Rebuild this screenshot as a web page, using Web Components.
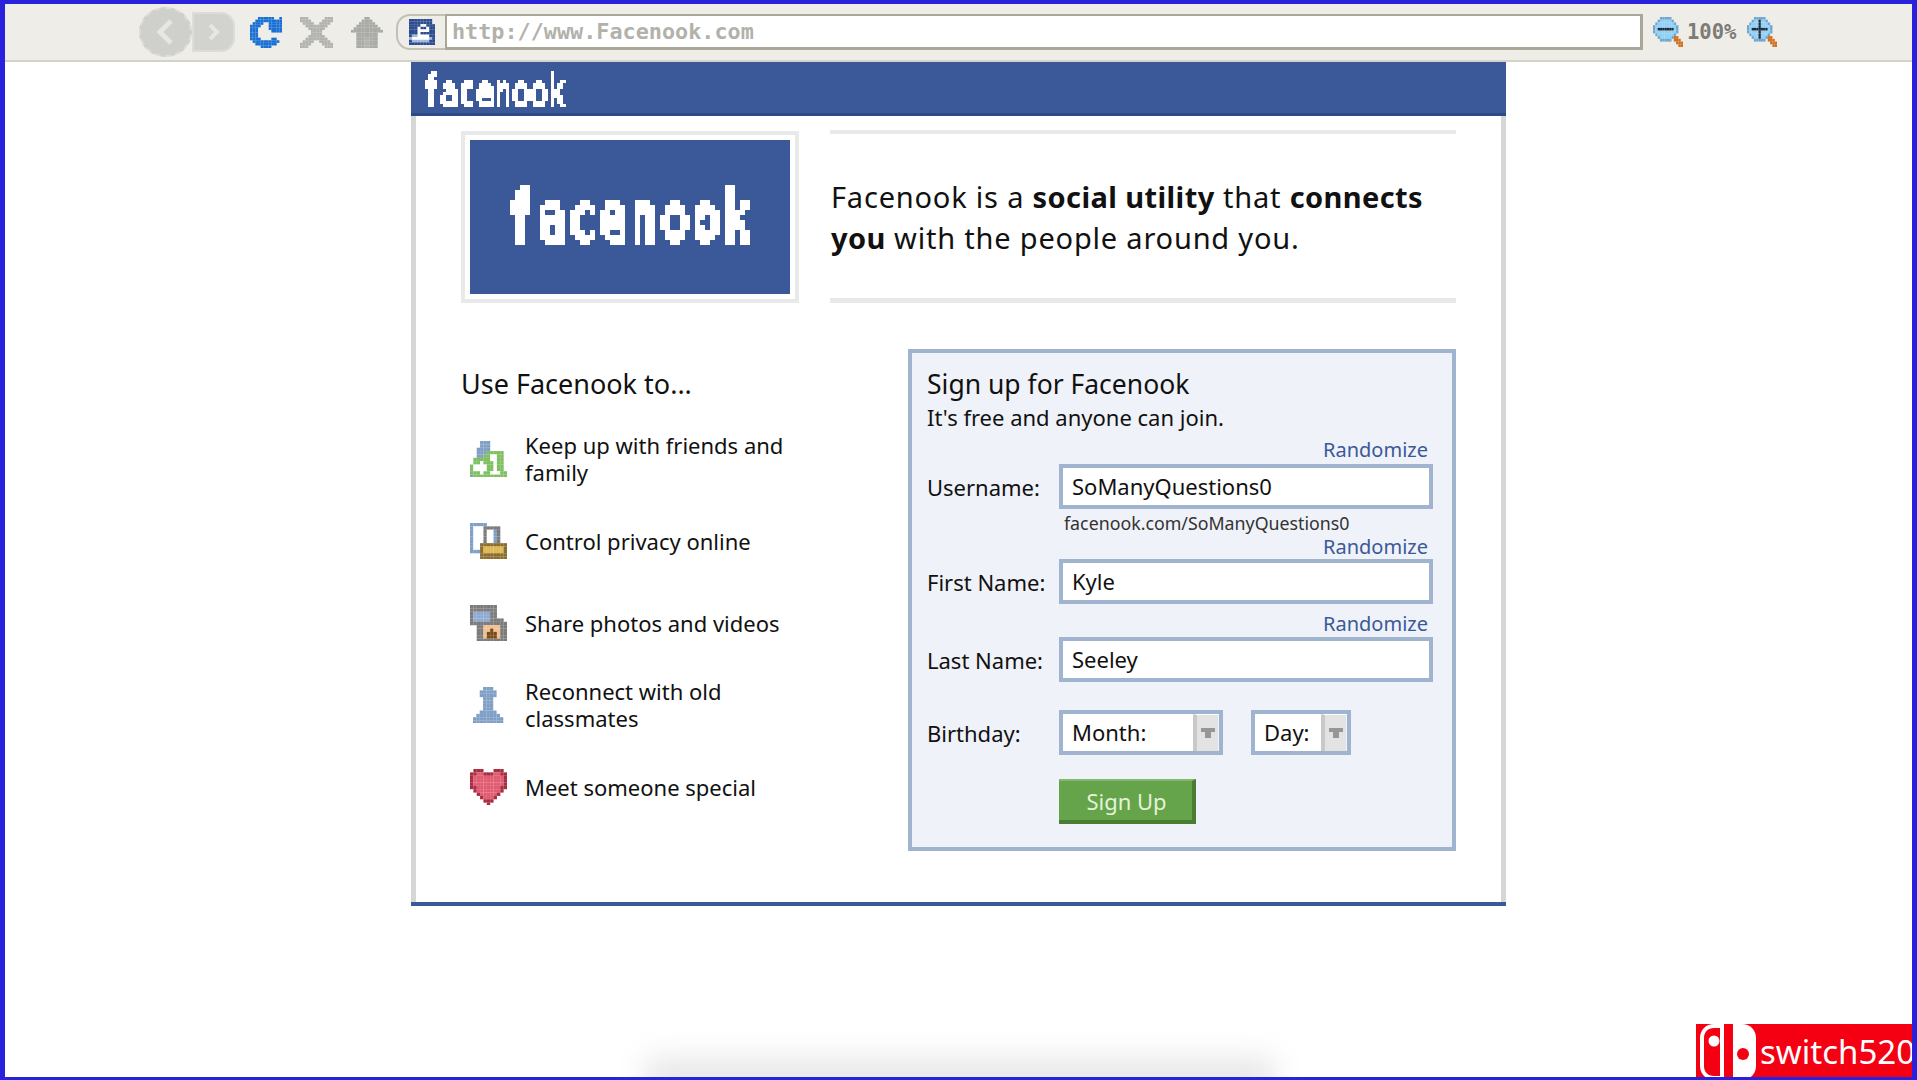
<!doctype html>
<html>
<head>
<meta charset="utf-8">
<title>Facenook</title>
<style>
  html, body { margin: 0; height: 100%; overflow: hidden; background: #fff; }
</style>
</head>
<body>
<browser-frame>
  <browser-toolbar></browser-toolbar>
  <nook-card>
    <nook-intro></nook-intro>
    <feature-list slot="left">
      <feature-item icon="friends">Keep up with friends and family</feature-item>
      <feature-item icon="privacy">Control privacy online</feature-item>
      <feature-item icon="photos">Share photos and videos</feature-item>
      <feature-item icon="pawn">Reconnect with old classmates</feature-item>
      <feature-item icon="heart">Meet someone special</feature-item>
    </feature-list>
    <signup-form slot="right"></signup-form>
  </nook-card>
  <switch-badge></switch-badge>
</browser-frame>

<script>
'use strict'

const FONT = `"Noto Sans", "Open Sans", sans-serif`

// filtre de pixellisation, le texte reste du vrai texte
function pixelFilter(id, tile) {
  const r = (tile - 1) / 2
  return `
    <svg width="0" height="0" style="position:absolute">
      <filter id="${id}" x="0" y="0" width="1" height="1" color-interpolation-filters="sRGB">
        <feFlood x="${r}" y="${r}" width="1" height="1"/>
        <feComposite width="${tile}" height="${tile}"/>
        <feTile result="a"/>
        <feComposite in="SourceGraphic" in2="a" operator="in"/>
        <feMorphology operator="dilate" radius="${r}"/>
        <feComponentTransfer><feFuncA type="discrete" tableValues="0 1 1 1"/></feComponentTransfer>
      </filter>
    </svg>`
}

const PALETTE = {
  b: '#7f9fc6', g: '#7ebf5f', w: '#ffffff', d: '#7b7b7b', n: '#8a6d2e', y: '#e0b850',
  l: '#8faad0', p: '#f0c090', o: '#7a4a14', r: '#a82d42', h: '#e05a70', m: '#c9485e',
  c: '#1a6fd4', x: '#b2b2ae', t: '#a9a9a5', s: '#2b4a90', q: '#8fd0f8', k: '#6fa6cf',
  e: '#1d2b3a', a: '#d07020', f: '#9db8dc',
}

const ART = {
  friends: [
    '...bbb.....',
    '...bbb.....',
    '..bbbb.....',
    '..bbbggggg.',
    '..bbggwwgg.',
    '.gggggwwgg.',
    '.ggwgggwgg.',
    'gwwwwggwgg.',
    'gwwwwggwgg.',
    'gggwggwwwgg',
    'bgggggggggg',
  ],
  privacy: [
    'bbbbb......',
    'bwwwddddd..',
    'bwwwdwwbd..',
    'bwwwdwwbd..',
    'bwwwdwwbd..',
    'bwwwdwwbd..',
    'bwwnnnnnnnn',
    'bwwnyyyyyyn',
    'bbbnyyyyyyn',
    '...nnnnnnnn',
    '...nnnnnnnn',
  ],
  photos: [
    'dddddddd...',
    'dddddddd...',
    'dllllldd...',
    'dllllldd...',
    'dllllldddd.',
    'ddddddddddd',
    '..ddpppppdd',
    '..ddppoppdd',
    '..ddpooopdd',
    '..ddpooopdd',
    '..ddddddddd',
  ],
  pawn: [
    '...bbb...',
    '..bbbbb..',
    '..bbbbb..',
    '...bbb...',
    '...bbb...',
    '...bbb...',
    '...bbb...',
    '..bbbbb..',
    '.bbbbbbb.',
    'bbbbbbbbb',
    'bbbbbbbbb',
  ],
  heart: [
    '.rrr...rrr.',
    'rrhhrrrhhrr',
    'rhhhhhhhhhr',
    'rhhhhhhhhhr',
    'rhhhhhhhhhr',
    'rrhhhhhhhrr',
    '.rhhhhhhhr.',
    '..rhhhhhr..',
    '...rhhhr...',
    '....rrr....',
    '.....r.....',
  ],
  reload: [
    '...cccccc..c',
    '..cccccccccc',
    '.cccc..ccccc',
    'cccc...ccccc',
    'ccc....ccccc',
    'ccc.....cccc',
    'ccc.........',
    'ccc.........',
    'cccc....cc..',
    '.cccccccccc.',
    '..cccccccc..',
    '....cccc....',
  ],
  stop: [
    'xxx......xxx',
    'xxxx....xxxx',
    '.xxxx..xxxx.',
    '..xxxxxxxx..',
    '...xxxxxx...',
    '....xxxx....',
    '....xxxx....',
    '...xxxxxx...',
    '..xxxxxxxx..',
    '.xxxx..xxxx.',
    'xxxx....xxxx',
    'xxx......xxx',
  ],
  home: [
    '.....tt.....',
    '....tttt....',
    '...tttttt...',
    '..tttttttt..',
    '.tttttttttt.',
    'tttttttttttt',
    '..tttttttt..',
    '..tttttttt..',
    '..tttxxttt..',
    '..tttxxttt..',
    '..tttxxttt..',
    '..tttxxttt..',
  ],
  site: [
    'ssssssss.',
    'ssssssss.',
    'sssswwsss',
    'ssswsswss',
    'ssswwwwss',
    'ssswsssss',
    'sffwwwwss',
    'fwwwwwwfs',
    'sffffffss',
    'sssssssss',
  ],
  zoomout: [
    '...kkkkk.....',
    '..kqqqqqk....',
    '.kqqqqqqqk...',
    'kqqqqqqqqqk..',
    'kqeeeeeeeqk..',
    'kqqqqqqqqqk..',
    '.kqqqqqqqk...',
    '..kqqqqqkaa..',
    '...kkkkk.aaa.',
    '..........aaa',
    '...........aa',
  ],
  zoomin: [
    '...kkkkk.....',
    '..kqqeqqk....',
    '.kqqqeqqqk...',
    'kqqqqeqqqqk..',
    'kqeeeeeeeqk..',
    'kqqqqeqqqqk..',
    '.kqqqeqqqk...',
    '..kqqeqqkaa..',
    '...kkkkk.aaa.',
    '..........aaa',
    '...........aa',
  ],
}

// petites icones pixel, dessinees en rects
function pixelSvg(name, w, h) {
  const rows = ART[name]
  const cols = Math.max(...rows.map(r => r.length))
  w = w || cols * 3.36
  h = h || rows.length * 3.36
  let rects = ''
  rows.forEach((row, y) => {
    ;[...row].forEach((ch, x) => {
      if (PALETTE[ch]) rects += `<rect x="${x}" y="${y}" width="1.02" height="1.02" fill="${PALETTE[ch]}"/>`
    })
  })
  return `<svg xmlns="http://www.w3.org/2000/svg" width="${w}" height="${h}" viewBox="0 0 ${cols} ${rows.length}" preserveAspectRatio="none" style="display:block">${rects}</svg>`
}

class BrowserFrame extends HTMLElement {
  constructor() {
    super()
    this.attachShadow({ mode: 'open' }).innerHTML = `
      <style>
        :host {
          display: flex;
          flex-direction: column;
          align-items: center;
          position: relative;
          box-sizing: border-box;
          width: 1917px;
          height: 1080px;
          overflow: hidden;
          border: solid #2a21dc;
          border-width: 4px 5px 3px;
          background: #fff;
          font-family: ${FONT};
          color: #111;
        }
        .shade {
          position: absolute;
          left: 640px;
          bottom: -24px;
          width: 630px;
          height: 44px;
          background: #e8e8e8;
          filter: blur(14px);
        }
      </style>
      <slot></slot>
      <div class="shade"></div>
    `
  }
}

class BrowserToolbar extends HTMLElement {
  constructor() {
    super()
    this.attachShadow({ mode: 'open' }).innerHTML = `
      <style>
        :host {
          display: flex;
          align-items: center;
          box-sizing: border-box;
          width: 100%;
          height: 58px;
          padding: 0 0 0 134px;
          background: #eeede8;
          border-bottom: 2px solid #d5d3c9;
          flex: none;
        }
        .nav { display: flex; align-items: center; width: 96px; height: 50px; flex: none; }
        .back {
          width: 53px; height: 50px; box-sizing: border-box; border-radius: 50%; flex: none;
          background: #cfcfcb; border: 2px dashed #dcdcd8;
          display: flex; align-items: center; justify-content: center;
          position: relative; z-index: 1;
        }
        .fwd {
          width: 43px; height: 40px; box-sizing: border-box; flex: none;
          background: #d2d2ce; border: 2px solid #dcdcd8; border-radius: 0 14px 14px 0;
          display: flex; align-items: center; justify-content: center;
        }
        .tool { flex: none; }
        .url {
          display: flex; flex: none; margin-left: 13px; height: 36px; width: 1247px; align-items: stretch;
        }
        .cap {
          width: 49px; box-sizing: border-box; flex: none;
          border: 2px solid #c4c1b4; border-right: 0; border-radius: 14px 0 0 14px;
          display: flex; align-items: center; justify-content: center;
        }
        .field {
          flex: 1; box-sizing: border-box; background: #fff;
          border: 2px solid #aaa698; border-width: 2px 3px 3px 2px;
          padding-left: 5px;
          display: flex; align-items: center;
        }
        .addr {
          font: bold 21.8px/30px "DejaVu Sans Mono", monospace; color: #b2b1ab; white-space: nowrap;
        }
        .pct {
          margin-left: 4px; width: 50px; flex: none;
          font: bold 20.5px/30px "DejaVu Sans Mono", monospace; color: #7d7b76; white-space: nowrap;
        }
      </style>
      <div class="nav">
        <div class="back"><svg width="20" height="26" viewBox="0 0 20 26"><path d="M15 2 4 13l11 11" fill="none" stroke="#e6e6e2" stroke-width="5"/></svg></div>
        <div class="fwd"><svg width="12" height="18" viewBox="0 0 12 18"><path d="M2 2l7 7-7 7" fill="none" stroke="#e6e6e2" stroke-width="4"/></svg></div>
      </div>
      <div class="tool" style="margin-left:15px">${pixelSvg('reload', 32, 31)}</div>
      <div class="tool" style="margin-left:18px">${pixelSvg('stop', 33, 31)}</div>
      <div class="tool" style="margin-left:18px">${pixelSvg('home', 32, 31)}</div>
      <div class="url">
        <div class="cap">${pixelSvg('site', 26, 26)}</div>
        <div class="field"><span class="addr">http://www.Facenook.com</span></div>
      </div>
      <div class="tool" style="margin-left:10px">${pixelSvg('zoomout', 30, 30)}</div>
      <span class="pct">100%</span>
      <div class="tool" style="margin-left:10px">${pixelSvg('zoomin', 30, 30)}</div>
    `
  }
}

class NookCard extends HTMLElement {
  constructor() {
    super()
    this.attachShadow({ mode: 'open' }).innerHTML = `
      <style>
        :host {
          display: block;
          box-sizing: border-box;
          width: 1095px;
          flex: none;
          border-bottom: 4px solid #3b5998;
        }
        .bar {
          box-sizing: border-box; height: 54px; background: #3b5998; border-bottom: 3px solid #2c4a86;
          padding-left: 11px; overflow: hidden;
        }
        .px { filter: url(#pxh); width: 260px; height: 51px; display: flex; align-items: center; padding-top: 6px; box-sizing: border-box; }
        .word {
          display: inline-block; transform-origin: 0 50%; transform: scale(.65, 1);
          font: bold 46px/44px "DejaVu Sans Mono", monospace; color: #fff; white-space: nowrap;
          -webkit-text-stroke: 1px #fff;
        }
        .body {
          border: solid #d6d6d6; border-width: 0 5px;
          padding: 14px 45px 51px;
        }
        .cols { display: flex; margin-top: 47px; }
        .left { width: 447px; flex: none; }
        .right { flex: 1; }
      </style>
      ${pixelFilter('pxh', 3)}
      <div class="bar"><div class="px"><span class="word">facenook</span></div></div>
      <div class="body">
        <slot></slot>
        <div class="cols">
          <div class="left"><slot name="left"></slot></div>
          <div class="right"><slot name="right"></slot></div>
        </div>
      </div>
    `
  }
}

class NookIntro extends HTMLElement {
  constructor() {
    super()
    this.attachShadow({ mode: 'open' }).innerHTML = `
      <style>
        :host { display: flex; align-items: stretch; height: 173px; }
        .logo {
          box-sizing: border-box; width: 338px; flex: none; margin-top: 1px;
          border: 4px solid #e9e9e9; padding: 5px; background: #fff;
        }
        .blue {
          height: 100%; background: #3b5998; overflow: hidden;
          display: flex; align-items: center; justify-content: center;
        }
        .px { filter: url(#pxl); width: 100%; height: 100%; display: flex; align-items: center; justify-content: center; }
        .word {
          display: inline-block; transform: scale(.64, 1);
          font: bold 72px/1 "DejaVu Sans Mono", monospace; letter-spacing: 5px; color: #fff; white-space: nowrap;
          -webkit-text-stroke: 3px #fff;
        }
        .tag {
          flex: 1; margin-left: 31px; box-sizing: border-box;
          border: solid #e9e9e9; border-width: 4px 0 5px;
          display: flex; align-items: center;
          font-size: 29px; line-height: 41px; letter-spacing: .8px; padding: 2px 0 0 1px;
        }
        b { font-weight: 700; letter-spacing: .4px; }
      </style>
      ${pixelFilter('pxl', 5)}
      <div class="logo"><div class="blue"><div class="px"><span class="word">facenook</span></div></div></div>
      <div class="tag"><div>Facenook is a <b>social utility</b> that <b>connects</b> <b>you</b> with the people around you.</div></div>
    `
  }
}

class FeatureList extends HTMLElement {
  constructor() {
    super()
    this.attachShadow({ mode: 'open' }).innerHTML = `
      <style>
        :host { display: block; }
        h2 { margin: 0; height: 68px; font: 400 27px/68px ${FONT}; }
      </style>
      <h2>Use Facenook to...</h2>
      <slot></slot>
    `
  }
}

class FeatureItem extends HTMLElement {
  constructor() {
    super()
    this.attachShadow({ mode: 'open' }).innerHTML = `
      <style>
        :host {
          display: flex; align-items: center; height: 82px;
          padding-left: 9px; font-size: 22px; line-height: 27px;
        }
        .ico { width: 37px; flex: none; margin-right: 18px; display: flex; justify-content: center; }
        .txt { width: 275px; }
      </style>
      <div class="ico">${pixelSvg(this.getAttribute('icon'))}</div>
      <div class="txt"><slot></slot></div>
    `
  }
}

class SignupForm extends HTMLElement {
  constructor() {
    super()
    this.attachShadow({ mode: 'open' }).innerHTML = `
      <style>
        :host {
          display: block; box-sizing: border-box; height: 502px;
          background: #eff2f8; border: 4px solid #a0b4d0;
          padding: 16px 19px 0 15px; margin-top: -1px;
        }
        h2 { margin: 0; font: 400 26.5px/30px ${FONT}; }
        .sub { font-size: 22px; line-height: 26px; margin-top: 5px; }
      </style>
      <h2>Sign up for Facenook</h2>
      <div class="sub">It's free and anyone can join.</div>
      <nook-field label="Username:" value="SoManyQuestions0" hint="facenook.com/SoManyQuestions0" style="--top:9px;--gap:3px"></nook-field>
      <nook-field label="First Name:" value="Kyle" style="--top:2px;--gap:1px"></nook-field>
      <nook-field label="Last Name:" value="Seeley" style="--top:9px;--gap:2px"></nook-field>
      <birth-row></birth-row>
      <nook-button>Sign Up</nook-button>
    `
  }
}

class NookField extends HTMLElement {
  constructor() {
    super()
    const hint = this.getAttribute('hint')
    this.attachShadow({ mode: 'open' }).innerHTML = `
      <style>
        :host { display: block; font-size: 22px; margin-top: var(--top, 0); }
        .rand {
          text-align: right; padding-right: 5px; height: 22px; line-height: 22px;
          margin-bottom: var(--gap, 1px); color: #3b5998; font-size: 20px;
        }
        .row { display: flex; align-items: center; }
        label { width: 132px; flex: none; }
        .box {
          box-sizing: border-box; width: 374px; height: 45px; background: #fff;
          border: 4px solid #a0b4d0; padding-left: 9px; line-height: 37px;
        }
        .hint {
          margin: 3px 0 0 137px; height: 22px; line-height: 22px;
          font-size: 17.8px; color: #333;
        }
      </style>
      <div class="rand">Randomize</div>
      <div class="row"><label>${this.getAttribute('label')}</label><div class="box">${this.getAttribute('value')}</div></div>
      ${hint ? `<div class="hint">${hint}</div>` : ''}
    `
  }
}

class BirthRow extends HTMLElement {
  constructor() {
    super()
    this.attachShadow({ mode: 'open' }).innerHTML = `
      <style>
        :host { display: flex; align-items: center; margin-top: 28px; font-size: 22px; }
        label { width: 132px; flex: none; }
      </style>
      <label>Birthday:</label>
      <nook-select style="width:164px">Month:</nook-select>
      <nook-select style="width:100px;margin-left:28px">Day:</nook-select>
    `
  }
}

class NookSelect extends HTMLElement {
  constructor() {
    super()
    this.attachShadow({ mode: 'open' }).innerHTML = `
      <style>
        :host {
          display: flex; box-sizing: border-box; height: 45px; background: #fff;
          border: 4px solid #a0b4d0; line-height: 37px;
        }
        .val { flex: 1; padding-left: 9px; }
        .arrow {
          width: 26px; flex: none; box-sizing: border-box; background: #e3e3e3;
          border-left: 4px solid #c9c9c9; border-top: 1px solid #fff; border-right: 1px solid #eff2f8;
          display: flex; align-items: center; justify-content: center;
        }
      </style>
      <div class="val"><slot></slot></div>
      <div class="arrow"><svg width="14" height="10" viewBox="0 0 14 10" shape-rendering="crispEdges"><path d="M0 0h14v4H10v6H4V4H0z" fill="#969696"/></svg></div>
    `
  }
}

class NookButton extends HTMLElement {
  constructor() {
    super()
    this.attachShadow({ mode: 'open' }).innerHTML = `
      <style>
        :host {
          display: block; box-sizing: border-box; width: 137px; height: 45px;
          margin: 24px 0 0 132px; padding-left: 2px; text-align: center; color: #e3f3d8;
          background: #66a44b; font-size: 22px; line-height: 41px;
          border: solid #4a7d32; border-width: 2px 4px 4px 0; border-top-color: #85b66f;
        }
      </style>
      <slot></slot>
    `
  }
}

class SwitchBadge extends HTMLElement {
  constructor() {
    super()
    this.attachShadow({ mode: 'open' }).innerHTML = `
      <style>
        :host {
          position: absolute; right: -5px; bottom: -3px;
          display: flex; align-items: center; box-sizing: border-box;
          width: 221px; height: 56px; background: #f50012; color: #fff;
          padding-left: 4px;
        }
        span { font: 400 33px/56px "Noto Sans", sans-serif; margin-left: 4px; white-space: nowrap; }
        svg { flex: none; display: block; }
      </style>
      <svg width="56" height="56" viewBox="0 0 56 56">
        <path d="M24 0H14C6 0 0 6 0 14v28c0 8 6 14 14 14h10zM20 4v48h-6c-6 0-10-4-10-10V14c0-6 4-10 10-10z" fill="#fff" fill-rule="evenodd"/>
        <circle cx="14" cy="17" r="5.500" fill="#fff"/>
        <path d="M33 0h9c8 0 14 6 14 14v28c0 8-6 14-14 14h-9z" fill="#fff"/>
        <circle cx="43" cy="30" r="6" fill="#f50012"/>
      </svg>
      <span>switch520</span>
    `
  }
}

customElements.define('browser-frame', BrowserFrame)
customElements.define('browser-toolbar', BrowserToolbar)
customElements.define('nook-card', NookCard)
customElements.define('nook-intro', NookIntro)
customElements.define('feature-list', FeatureList)
customElements.define('feature-item', FeatureItem)
customElements.define('signup-form', SignupForm)
customElements.define('nook-field', NookField)
customElements.define('birth-row', BirthRow)
customElements.define('nook-select', NookSelect)
customElements.define('nook-button', NookButton)
customElements.define('switch-badge', SwitchBadge)
</script>
</body>
</html>
